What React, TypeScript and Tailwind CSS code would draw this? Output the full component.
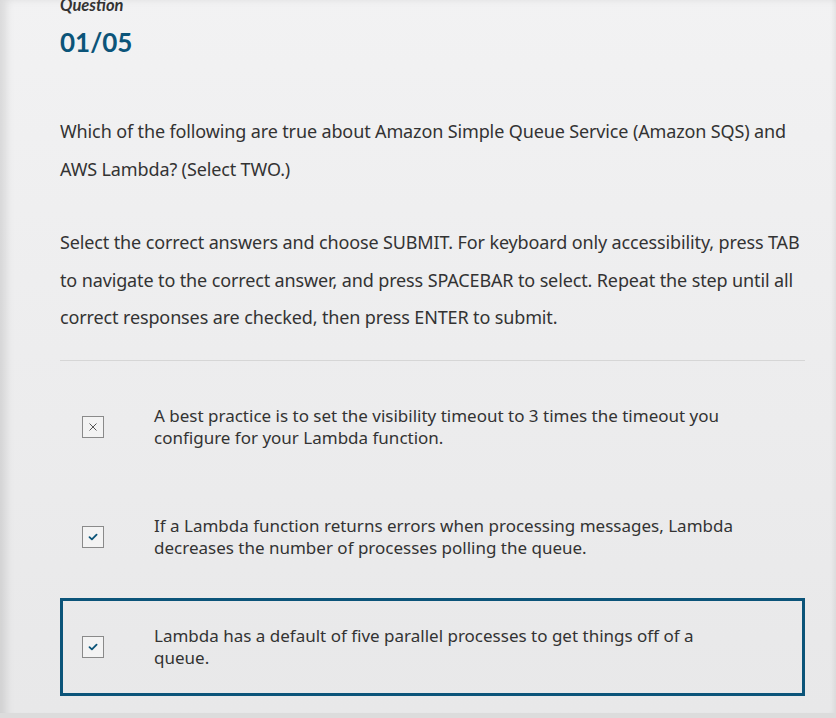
import React from "react";

type Option = {
	id: number;
	text: string;
	state: "wrong" | "checked";
	focused?: boolean;
};

const options: Option[] = [
	{
		id: 1,
		text: "A best practice is to set the visibility timeout to 3 times the timeout you configure for your Lambda function.",
		state: "wrong",
	},
	{
		id: 2,
		text: "If a Lambda function returns errors when processing messages, Lambda decreases the number of processes polling the queue.",
		state: "checked",
	},
	{
		id: 3,
		text: "Lambda has a default of five parallel processes to get things off of a queue.",
		state: "checked",
		focused: true,
	},
];

const Box = ({ state }: { state: Option["state"] }) => (
	<div className="flex h-[22px] w-[22px] shrink-0 items-center justify-center border border-[#8a8a8a] bg-[#f3f3f3]">
		{state === "wrong" ? (
			<svg width="10" height="10" viewBox="0 0 10 10">
				<path d="M1.5 1.5l7 7M8.5 1.5l-7 7" stroke="#555" strokeWidth="1" fill="none" />
			</svg>
		) : (
			<svg width="10" height="8" viewBox="0 0 10 8">
				<path d="M1.5 4.2l2.4 2.2L8.6 1.6" stroke="#0b5479" strokeWidth="1.8" fill="none" strokeLinecap="round" strokeLinejoin="round" />
			</svg>
		)}
	</div>
);

export default function App() {
	return (
		<div className="h-[718px] w-[836px] overflow-hidden bg-[#dcdcdc]">
			<div className="h-full w-full bg-gradient-to-b from-[#f2f2f3] to-[#e8e8e9] pl-[60px] pr-[31px] shadow-[inset_10px_8px_9px_-4px_rgba(0,0,0,0.1),inset_-5px_0_5px_-3px_rgba(0,0,0,0.07)]">
				<p className="-mt-[5px] text-[16.5px] font-bold italic leading-[20px] text-[#333]" style={{ fontFamily: "Lato, sans-serif" }}>
					Question
				</p>
				<h2 className="mt-[11px] text-[26px] font-bold leading-[32px] text-[#0b5479]" style={{ fontFamily: "Lato, sans-serif" }}>
					01/05
				</h2>

				<div style={{ fontFamily: "'Noto Sans', sans-serif" }} className="text-[#333]">
					<p className="mt-[54px] text-[18px] leading-[38px] tracking-[-0.13px]">
						Which of the following are true about Amazon Simple Queue Service (Amazon SQS) and AWS Lambda? (Select TWO.)
					</p>
					<p className="mt-[36px] text-[18px] leading-[37.5px] tracking-[-0.13px]">
						Select the correct answers and choose SUBMIT. For keyboard only accessibility, press TAB to navigate to the correct answer, and press SPACEBAR to select. Repeat the step until all correct responses are checked, then press ENTER to submit.
					</p>

					<div className="mt-[23px] h-px w-full bg-[#d6d6d6]" />

					<div className="mt-[17px] flex flex-col gap-[12px]">
						{options.map((o) => (
							<div
								key={o.id}
								className={
									o.focused
										? "flex h-[98px] items-center border-[3px] border-[#0b5479] pl-[19px]"
										: "flex h-[98px] items-center border-[3px] border-transparent pl-[19px]"
								}
							>
								<Box state={o.state} />
								<p className="ml-[50px] w-[590px] text-[17px] leading-[22px]">{o.text}</p>
							</div>
						))}
					</div>
				</div>
			</div>
		</div>
	);
}
